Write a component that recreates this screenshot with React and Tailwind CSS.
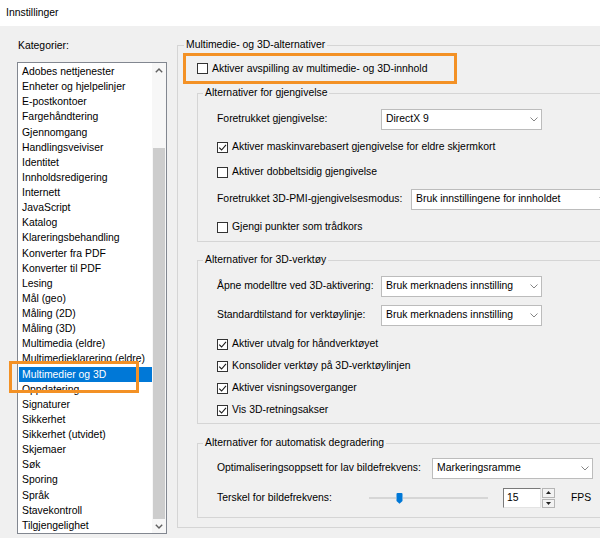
import React from "react";

const items = [
  "Adobes nettjenester",
  "Enheter og hjelpelinjer",
  "E-postkontoer",
  "Fargehåndtering",
  "Gjennomgang",
  "Handlingsveiviser",
  "Identitet",
  "Innholdsredigering",
  "Internett",
  "JavaScript",
  "Katalog",
  "Klareringsbehandling",
  "Konverter fra PDF",
  "Konverter til PDF",
  "Lesing",
  "Mål (geo)",
  "Måling (2D)",
  "Måling (3D)",
  "Multimedia (eldre)",
  "Multimedieklarering (eldre)",
  "Multimedier og 3D",
  "Oppdatering",
  "Signaturer",
  "Sikkerhet",
  "Sikkerhet (utvidet)",
  "Skjemaer",
  "Søk",
  "Sporing",
  "Språk",
  "Stavekontroll",
  "Tilgjengelighet",
];

function Checkbox({ checked }) {
  return (
    <span className="w-[11px] h-[11px] shrink-0 border border-[#333333] bg-white flex items-center justify-center">
      {checked && (
        <svg width="9" height="9" viewBox="0 0 9 9">
          <path d="M1.2 4.6 L3.6 7 L8 1.8" fill="none" stroke="#1a1a1a" strokeWidth="1.1" />
        </svg>
      )}
    </span>
  );
}

function CheckRow({ checked, label, className = "" }) {
  return (
    <div className={"h-[22px] flex items-center gap-[4px] " + className}>
      <Checkbox checked={checked} />
      <span>{label}</span>
    </div>
  );
}

function Select({ value, className = "" }) {
  return (
    <div className={"h-[21px] shrink-0 bg-white border border-[#bcbcbc] flex items-center pl-[4px] pr-[3px] " + className}>
      <span className="flex-1 whitespace-nowrap overflow-hidden">{value}</span>
      <svg width="8" height="5" viewBox="0 0 8 5" className="shrink-0">
        <path d="M0.5 0.5 L4 4 L7.5 0.5" fill="none" stroke="#858585" strokeWidth="1" />
      </svg>
    </div>
  );
}

export default function App() {
  return (
    <div className="w-[600px] h-[538px] overflow-hidden bg-[#f0f0f0] text-[10.4px] leading-[12px] text-black relative font-['Liberation_Sans',Arial,sans-serif]">
      <div className="h-[26px] bg-white flex items-center pl-[6px]">Innstillinger</div>
      <div className="flex">
        {/* left column */}
        <div className="w-[177px] shrink-0 pl-[17px]">
          <div className="mt-[14px] h-[12px] pl-[1px]">Kategorier:</div>
          <div className="mt-[10px] w-[150px] h-[472px] border border-[#828790] bg-white flex">
            <div className="flex-1 pt-[1px] pl-[1px] flex flex-col">
              {items.map((it) => (
                <div
                  key={it}
                  className={
                    "h-[15.13px] leading-[15.13px] pl-[3px] whitespace-nowrap overflow-hidden " +
                    (it === "Multimedier og 3D" ? "bg-[#0078d7] text-white" : "")
                  }
                >
                  {it}
                </div>
              ))}
            </div>
            <div className="w-[14px] shrink-0 flex flex-col bg-[#f7f7f7]">
              <div className="h-[14px] flex items-center justify-center">
                <svg width="8" height="5" viewBox="0 0 8 5">
                  <path d="M0.8 4.2 L4 1 L7.2 4.2" fill="none" stroke="#606060" strokeWidth="1.4" />
                </svg>
              </div>
              <div className="h-[71px]" />
              <div className="h-[371px] mx-[1px] bg-[#cdcdcd]" />
              <div className="h-[14px] flex items-center justify-center">
                <svg width="8" height="5" viewBox="0 0 8 5">
                  <path d="M0.8 0.8 L4 4 L7.2 0.8" fill="none" stroke="#606060" strokeWidth="1.4" />
                </svg>
              </div>
            </div>
          </div>
        </div>

        {/* right column */}
        <div className="flex-1 min-w-0">
          <fieldset className="mt-[13px] w-[460px] border border-[#d5d5d5] pl-[5px] pb-[9px]">
            <legend className="ml-[1px] px-[2px] leading-[12px]">Multimedie- og 3D-alternativer</legend>
            <div className="flex flex-col">
              <div className="mt-[2px] w-[274px] h-[31px] border-[3px] border-[#f39125] flex items-center pl-[11px] gap-[4px]">
                <Checkbox />
                <span>Aktiver avspilling av multimedie- og 3D-innhold</span>
              </div>

              <fieldset className="mt-[3px] ml-[14px] border border-[#d5d5d5] pl-[5px] pb-[3px]">
                <legend className="px-[2px] leading-[12px]">Alternativer for gjengivelse</legend>
                <div className="pl-[14px] flex flex-col">
                  <div className="mt-[9px] h-[22px] flex items-center">
                    <span className="w-[164px] shrink-0">Foretrukket gjengivelse:</span>
                    <Select value="DirectX 9" className="w-[161px]" />
                  </div>
                  <CheckRow checked className="mt-[6px]" label="Aktiver maskinvarebasert gjengivelse for eldre skjermkort" />
                  <CheckRow className="mt-[3px]" label="Aktiver dobbeltsidig gjengivelse" />
                  <div className="mt-[5px] h-[22px] flex items-center">
                    <span className="w-[194px] shrink-0">Foretrukket 3D-PMI-gjengivelsesmodus:</span>
                    <Select value="Bruk innstillingene for innholdet" className="w-[200px]" />
                  </div>
                  <CheckRow className="mt-[6px]" label="Gjengi punkter som trådkors" />
                </div>
              </fieldset>

              <fieldset className="mt-[12px] ml-[14px] border border-[#d5d5d5] pl-[5px] pb-[2px]">
                <legend className="px-[2px] leading-[12px]">Alternativer for 3D-verktøy</legend>
                <div className="pl-[14px] flex flex-col">
                  <div className="mt-[9px] h-[22px] flex items-center">
                    <span className="w-[164px] shrink-0">Åpne modelltre ved 3D-aktivering:</span>
                    <Select value="Bruk merknadens innstilling" className="w-[161px]" />
                  </div>
                  <div className="mt-[7px] h-[22px] flex items-center">
                    <span className="w-[164px] shrink-0">Standardtilstand for verktøylinje:</span>
                    <Select value="Bruk merknadens innstilling" className="w-[161px]" />
                  </div>
                  <CheckRow checked className="mt-[7px]" label="Aktiver utvalg for håndverktøyet" />
                  <CheckRow checked label="Konsolider verktøy på 3D-verktøylinjen" />
                  <CheckRow checked label="Aktiver visningsoverganger" />
                  <CheckRow checked label="Vis 3D-retningsakser" />
                </div>
              </fieldset>

              <fieldset className="mt-[13px] ml-[14px] border border-[#d5d5d5] pl-[5px] pb-[8px]">
                <legend className="px-[2px] leading-[12px]">Alternativer for automatisk degradering</legend>
                <div className="pl-[14px] flex flex-col">
                  <div className="mt-[8px] h-[22px] flex items-center">
                    <span className="w-[215px] shrink-0">Optimaliseringsoppsett for lav bildefrekvens:</span>
                    <Select value="Markeringsramme" className="w-[161px]" />
                  </div>
                  <div className="mt-[8px] h-[22px] flex items-center">
                    <span className="w-[152px] shrink-0">Terskel for bildefrekvens:</span>
                    <div className="w-[119px] shrink-0 flex items-center">
                      <div className="w-[27px] h-[2px] bg-[#d6d6d6]" />
                      <svg width="7" height="11" viewBox="0 0 7 11" className="shrink-0">
                        <path d="M0.5 1 Q0.5 0 1.5 0 H5.5 Q6.5 0 6.5 1 V8 L3.5 10.8 L0.5 8 Z" fill="#0078d7" />
                      </svg>
                      <div className="flex-1 h-[2px] bg-[#d6d6d6]" />
                    </div>
                    <div className="ml-[15px] w-[38px] h-[20px] bg-white border border-[#7a7a7a] border-r-[#e3e3e3] border-b-[#e3e3e3] flex items-center pl-[3px]">
                      15
                    </div>
                    <div className="w-[14px] h-[20px] flex flex-col gap-[1px] pl-[1px]">
                      <div className="flex-1 bg-[#f3f3f3] border border-[#b5b5b5] flex items-center justify-center">
                        <svg width="5" height="3" viewBox="0 0 5 3"><path d="M0 3 L2.5 0 L5 3 Z" fill="#222" /></svg>
                      </div>
                      <div className="flex-1 bg-[#f3f3f3] border border-[#b5b5b5] flex items-center justify-center">
                        <svg width="5" height="3" viewBox="0 0 5 3"><path d="M0 0 L2.5 3 L5 0 Z" fill="#222" /></svg>
                      </div>
                    </div>
                    <span className="ml-[16px]">FPS</span>
                  </div>
                </div>
              </fieldset>
            </div>
          </fieldset>
        </div>
      </div>

      {/* annotation overlay on the list */}
      <div className="absolute left-[9px] top-[361px] w-[130px] h-[32px] border-[3px] border-[#f39125]" />
    </div>
  );
}
